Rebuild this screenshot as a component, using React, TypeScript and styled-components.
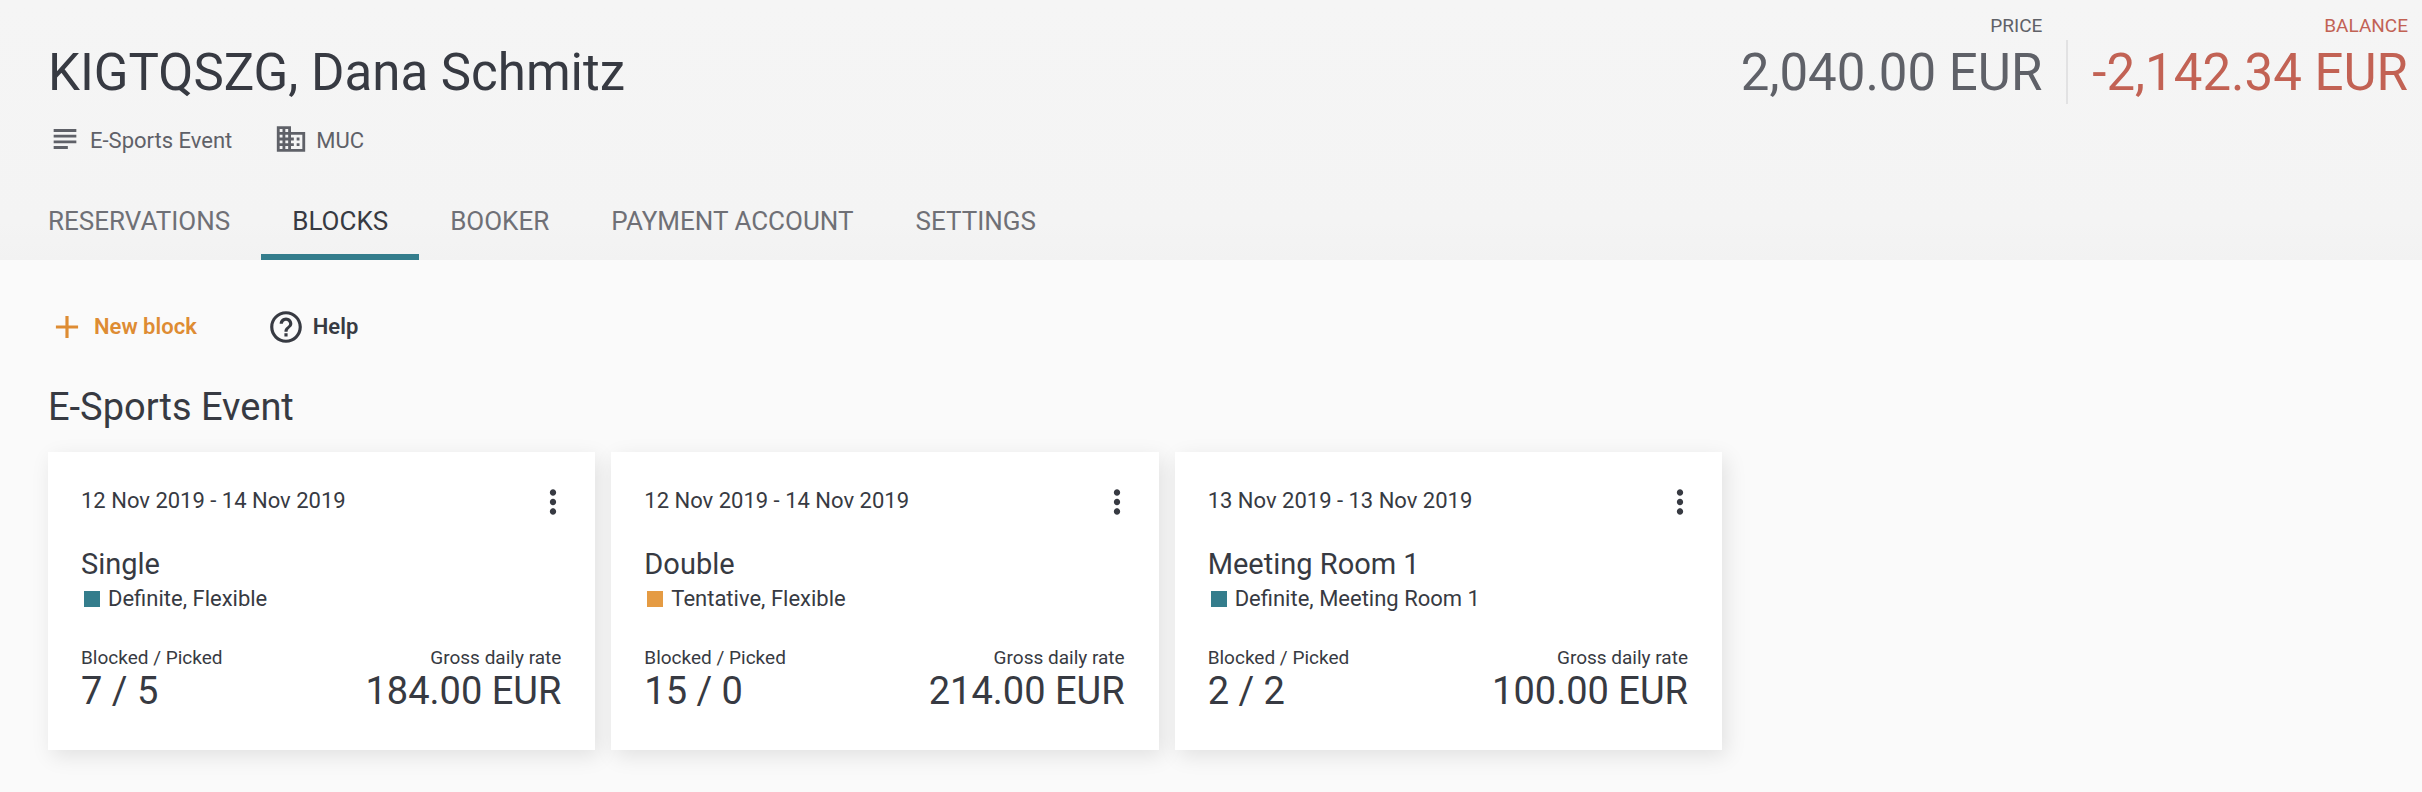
import React from "react";
import styled, { createGlobalStyle } from "styled-components";
import { MdAdd, MdBusiness, MdHelpOutline, MdMoreVert, MdSubject } from "react-icons/md";

const color = {
  ink: "#373a42",
  muted: "#5f6168",
  tab: "#6f7076",
  teal: "#347d8c",
  orange: "#de8c33",
  amber: "#e59b43",
  red: "#c26254",
};

const GlobalStyle = createGlobalStyle`
  *, *::before, *::after { box-sizing: border-box; }
  body {
    margin: 0;
    background: #fafafa;
    color: ${color.ink};
    font-family: Roboto, "Liberation Sans", sans-serif;
  }
  h1, h2, h3, p, dl, dd { margin: 0; font-weight: 400; }
  button { font: inherit; color: inherit; background: none; border: 0; padding: 0; cursor: pointer; }
`;

const Header = styled.header`
  background: linear-gradient(#f5f5f5 0, #f4f4f4 85%, #f2f2f2 100%);
`;

const HeaderTop = styled.div`
  display: flex;
  justify-content: space-between;
  padding: 0 14px 0 48px;
`;

const Identity = styled.div`
  padding-top: 42px;
`;

const Title = styled.h1`
  font-size: 51px;
  line-height: 62px;
`;

const MetaList = styled.div`
  display: flex;
  gap: 42px;
  margin-top: 18px;
`;

const MetaItem = styled.span`
  display: flex;
  align-items: flex-start;
  gap: 8px;
  font-size: 22px;
  line-height: 38px;
  color: ${color.muted};
`;

const Totals = styled.dl`
  display: flex;
  align-items: flex-start;
  padding-top: 12px;
`;

const Total = styled.div<{ $alert?: boolean }>`
  color: ${(p) => (p.$alert ? color.red : color.muted)};
  text-align: right;
`;

const TotalLabel = styled.dt`
  font-size: 19px;
  line-height: 28px;
`;

const TotalValue = styled.dd<{ $divided?: boolean }>`
  font-size: 51px;
  line-height: 62px;
  padding: 2px 0 0 24px;
  margin-left: ${(p) => (p.$divided ? "24px" : "0")};
  border-left: ${(p) => (p.$divided ? "2px solid #e2e2e3" : "0")};
`;

const Tabs = styled.nav`
  display: flex;
  margin-top: 22px;
  padding-left: 17px;
`;

const Tab = styled.a<{ $active?: boolean }>`
  padding: 0 31px;
  font-size: 26px;
  line-height: 78px;
  text-decoration: none;
  color: ${(p) => (p.$active ? color.ink : color.tab)};
  box-shadow: ${(p) => (p.$active ? `inset 0 -6px ${color.teal}` : "none")};
`;

const Main = styled.main`
  padding: 47px 48px 40px;
`;

const Actions = styled.div`
  display: flex;
  gap: 70px;
`;

const Action = styled.button<{ $primary?: boolean }>`
  && {
    display: flex;
    align-items: center;
    gap: 8px;
    color: ${(p) => (p.$primary ? color.orange : color.ink)};
    font-size: 22px;
    font-weight: 600;
    line-height: 40px;
  }
`;

const SectionTitle = styled.h2`
  margin-top: 36px;
  font-size: 38px;
  line-height: 48px;
`;

const CardGrid = styled.section`
  display: grid;
  grid-template-columns: repeat(3, minmax(0, 1fr));
  gap: 16px;
  max-width: 1674px;
  margin-top: 21px;
`;

const Card = styled.article`
  padding: 31px 34px 37px 33px;
  background: #fff;
  box-shadow: 4px 6px 20px rgba(0, 0, 0, 0.1);
`;

const CardHeader = styled.div`
  display: flex;
  justify-content: space-between;
  align-items: flex-start;
  margin-right: -11px;
  font-size: 22px;
  line-height: 36px;
`;

const MenuButton = styled.button`
  display: flex;
`;

const RoomName = styled.h3`
  margin-top: 25px;
  font-size: 29px;
  line-height: 36px;
`;

const Status = styled.p`
  display: flex;
  align-items: center;
  gap: 8px;
  padding-left: 3px;
  font-size: 22px;
  line-height: 34px;
`;

const Swatch = styled.span<{ $tentative: boolean }>`
  width: 16px;
  height: 16px;
  background: ${(p) => (p.$tentative ? color.amber : color.teal)};
`;

const Figures = styled.dl`
  display: flex;
  justify-content: space-between;
  padding-top: 29px;
`;

const Figure = styled.div`
  &:last-child { text-align: right; }
`;

const FigureLabel = styled.dt`
  font-size: 19px;
  line-height: 25px;
`;

const FigureValue = styled.dd`
  font-size: 38px;
  line-height: 43px;
`;

const tabs = ["RESERVATIONS", "BLOCKS", "BOOKER", "PAYMENT ACCOUNT", "SETTINGS"];

const blocks = [
  { dates: "12 Nov 2019 - 14 Nov 2019", name: "Single", status: "Definite", plan: "Flexible", picked: "7 / 5", rate: "184.00 EUR" },
  { dates: "12 Nov 2019 - 14 Nov 2019", name: "Double", status: "Tentative", plan: "Flexible", picked: "15 / 0", rate: "214.00 EUR" },
  { dates: "13 Nov 2019 - 13 Nov 2019", name: "Meeting Room 1", status: "Definite", plan: "Meeting Room 1", picked: "2 / 2", rate: "100.00 EUR" },
];

export default function App() {
  return (
    <>
      <GlobalStyle />
      <Header>
        <HeaderTop>
          <Identity>
            <Title>KIGTQSZG, Dana Schmitz</Title>
            <MetaList>
              <MetaItem><MdSubject size={34} />E-Sports Event</MetaItem>
              <MetaItem><MdBusiness size={34} />MUC</MetaItem>
            </MetaList>
          </Identity>
          <Totals>
            <Total>
              <TotalLabel>PRICE</TotalLabel>
              <TotalValue>2,040.00 EUR</TotalValue>
            </Total>
            <Total $alert>
              <TotalLabel>BALANCE</TotalLabel>
              <TotalValue $divided>-2,142.34 EUR</TotalValue>
            </Total>
          </Totals>
        </HeaderTop>
        <Tabs>
          {tabs.map((tab) => (
            <Tab key={tab} href="#" $active={tab === "BLOCKS"}>{tab}</Tab>
          ))}
        </Tabs>
      </Header>
      <Main>
        <Actions>
          <Action $primary><MdAdd size={38} />New block</Action>
          <Action><MdHelpOutline size={38} />Help</Action>
        </Actions>
        <SectionTitle>E-Sports Event</SectionTitle>
        <CardGrid>
          {blocks.map((block) => (
            <Card key={block.name}>
              <CardHeader>
                <span>{block.dates}</span>
                <MenuButton aria-label={`Options for ${block.name}`}><MdMoreVert size={38} /></MenuButton>
              </CardHeader>
              <RoomName>{block.name}</RoomName>
              <Status>
                <Swatch $tentative={block.status === "Tentative"} />
                {block.status}, {block.plan}
              </Status>
              <Figures>
                <Figure>
                  <FigureLabel>Blocked / Picked</FigureLabel>
                  <FigureValue>{block.picked}</FigureValue>
                </Figure>
                <Figure>
                  <FigureLabel>Gross daily rate</FigureLabel>
                  <FigureValue>{block.rate}</FigureValue>
                </Figure>
              </Figures>
            </Card>
          ))}
        </CardGrid>
      </Main>
    </>
  );
}
